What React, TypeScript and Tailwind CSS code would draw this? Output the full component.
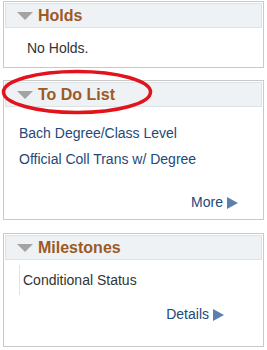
import React from "react";

const Triangle = () => (
  <svg width="16" height="8" viewBox="0 0 16 8" className="shrink-0">
    <polygon points="0,0 16,0 8,8" fill="#a3a3a3" />
  </svg>
);

const Arrow = () => (
  <svg width="11" height="12" viewBox="0 0 11 12" className="ml-[4px] mt-[2px]">
    <polygon points="0,0 11,6 0,12" fill="#5d7fb0" />
  </svg>
);

const Panel = ({ title, children, className }: { title: string; children: React.ReactNode; className?: string }) => (
  <div className={`ml-[3px] w-[261px] border border-[#c9c9c9] bg-white ${className ?? ""}`}>
    <div className="m-px flex h-[25px] items-center gap-[5px] border border-[#dde2e6] bg-[#eef2f5] pl-[11px]">
      <Triangle />
      <span className="text-[16px] font-bold leading-none text-[#9d5a22]">{title}</span>
    </div>
    {children}
  </div>
);

const App = () => {
  return (
    <div className="relative h-[350px] w-[267px] bg-white pt-px" style={{ fontFamily: '"Liberation Sans", Arial, sans-serif' }}>
      <Panel title="Holds">
        <div className="h-[38px] pl-[23px] pt-[11px] text-[14px] leading-4 text-[#333333]">No Holds.</div>
      </Panel>

      <Panel title="To Do List" className="mt-[12px]">
        <div className="flex h-[111px] flex-col px-[15px] pt-[17px] text-[14px] leading-4 text-[#22497a]">
          <span>Bach Degree/Class Level</span>
          <span className="mt-[10px]">Official Coll Trans w/ Degree</span>
          <div className="mt-[27px] flex items-center justify-end pr-[10px]">
            <span>More</span>
            <Arrow />
          </div>
        </div>
      </Panel>

      <Panel title="Milestones" className="mt-[13px]">
        <div className="flex h-[85px] flex-col text-[14px] leading-4">
          <div className="ml-[15px] mt-[4px] flex h-[30px] items-center border-l border-[#e2e2e2] pl-[3px] text-[#333333]">
            Conditional Status
          </div>
          <div className="mt-[11px] flex items-center justify-end pr-[39px] text-[#22497a]">
            <span>Details</span>
            <Arrow />
          </div>
        </div>
      </Panel>

      <svg className="pointer-events-none absolute left-0 top-0" width="267" height="350">
        <ellipse cx="77" cy="92" rx="73.5" ry="20.5" fill="none" stroke="#e2131c" strokeWidth="3.5" />
      </svg>
    </div>
  );
};

export default App;
